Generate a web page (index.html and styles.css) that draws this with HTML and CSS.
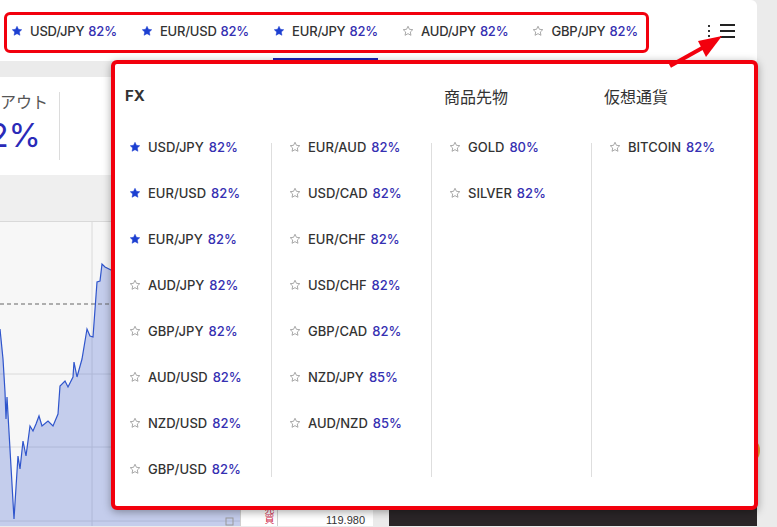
FILE: index.html
```html
<!DOCTYPE html>
<html lang="ja">
<head>
<meta charset="utf-8">
<title>Markets</title>
<link rel="stylesheet" href="styles.css">
</head>
<body>
<div class="app">
  <header class="topbar">
    <nav class="tabs">
      <a class="tab"><svg class="star on" viewBox="0 0 24 24"><path d="M12 2.5l2.9 6.1 6.6.8-4.9 4.6 1.3 6.6L12 17.3l-5.9 3.3 1.3-6.6-4.9-4.6 6.6-.8z"/></svg><span class="sym">USD/JPY</span><span class="pct">82%</span></a>
      <a class="tab"><svg class="star on" viewBox="0 0 24 24"><path d="M12 2.5l2.9 6.1 6.6.8-4.9 4.6 1.3 6.6L12 17.3l-5.9 3.3 1.3-6.6-4.9-4.6 6.6-.8z"/></svg><span class="sym">EUR/USD</span><span class="pct">82%</span></a>
      <a class="tab active"><svg class="star on" viewBox="0 0 24 24"><path d="M12 2.5l2.9 6.1 6.6.8-4.9 4.6 1.3 6.6L12 17.3l-5.9 3.3 1.3-6.6-4.9-4.6 6.6-.8z"/></svg><span class="sym">EUR/JPY</span><span class="pct">82%</span></a>
      <a class="tab"><svg class="star" viewBox="0 0 24 24"><path d="M12 2.5l2.9 6.1 6.6.8-4.9 4.6 1.3 6.6L12 17.3l-5.9 3.3 1.3-6.6-4.9-4.6 6.6-.8z"/></svg><span class="sym">AUD/JPY</span><span class="pct">82%</span></a>
      <a class="tab"><svg class="star" viewBox="0 0 24 24"><path d="M12 2.5l2.9 6.1 6.6.8-4.9 4.6 1.3 6.6L12 17.3l-5.9 3.3 1.3-6.6-4.9-4.6 6.6-.8z"/></svg><span class="sym">GBP/JPY</span><span class="pct">82%</span></a>
    </nav>
    <div class="tools">
      <span class="kebab"><i></i><i></i><i></i></span>
      <span class="burger"><i></i><i></i><i></i></span>
    </div>
  </header>

  <main class="main">
    <section class="stats">
      <div class="stat">
        <div class="stat-label">ペイアウト</div>
        <div class="stat-value">82%</div>
      </div>
    </section>
    <section class="toolbar"></section>
    <section class="trade">
      <div class="chart">
        <svg class="chart-svg" viewBox="0 0 240 304" width="240" height="304">
          <line x1="92" y1="0" x2="92" y2="304" class="grid"/>
          <line x1="0" y1="152" x2="240" y2="152" class="grid"/>
          <line x1="0" y1="225" x2="240" y2="225" class="grid"/>
          <line x1="0" y1="299" x2="240" y2="299" class="grid"/>
          <path class="area" d="M0,107 L3,137 L5,170 L6,197 L7,175 L14,297 L18,234 L20,247 L23,219 L26,234 L30,204 L33,209 L36,202 L39,194 L42,204 L48,199 L53,204 L58,192 L60,164 L65,159 L68,165 L73,155 L74,140 L77,155 L82,137 L87,107 L90,114 L93,115 L97,60 L100,59 L102,42 L105,45 L113,49 L130,60 L160,40 L200,70 L240,60 L240,304 L0,304 Z"/>
          <line x1="0" y1="82" x2="240" y2="82" class="dash"/>
          <path class="line" d="M0,107 L3,137 L5,170 L6,197 L7,175 L14,297 L18,234 L20,247 L23,219 L26,234 L30,204 L33,209 L36,202 L39,194 L42,204 L48,199 L53,204 L58,192 L60,164 L65,159 L68,165 L73,155 L74,140 L77,155 L82,137 L87,107 L90,114 L93,115 L97,60 L100,59 L102,42 L105,45 L113,49 L130,60 L160,40 L200,70 L240,60"/>
          <rect x="226" y="296" width="7" height="7" class="mini"/>
        </svg>
      </div>
      <div class="axis">
        <div class="axis-row">
          <span class="axis-tag">売買</span>
          <span class="axis-price">119.980</span>
        </div>
      </div>
      <div class="panel">
        <div class="panel-icons">
          <svg width="24" height="24" viewBox="0 0 24 24"><circle cx="12" cy="12" r="10" class="pi"/></svg>
          <svg width="24" height="24" viewBox="0 0 24 24"><circle cx="12" cy="12" r="10" class="pi"/></svg>
          <svg width="24" height="24" viewBox="0 0 24 24"><circle cx="10" cy="10" r="7" class="pi"/><line x1="15" y1="15" x2="21" y2="21" class="pi"/></svg>
        </div>
      </div>
    </section>
  </main>

  <div class="fab"></div>

  <div class="menu">
    <div class="menu-heads">
      <div class="head fx">FX</div>
      <div class="head"></div>
      <div class="head">商品先物</div>
      <div class="head">仮想通貨</div>
    </div>
    <div class="menu-cols">
      <ul class="col first">
        <li><svg class="star on" viewBox="0 0 24 24"><path d="M12 2.5l2.9 6.1 6.6.8-4.9 4.6 1.3 6.6L12 17.3l-5.9 3.3 1.3-6.6-4.9-4.6 6.6-.8z"/></svg><span class="sym">USD/JPY</span><span class="pct">82%</span></li>
        <li><svg class="star on" viewBox="0 0 24 24"><path d="M12 2.5l2.9 6.1 6.6.8-4.9 4.6 1.3 6.6L12 17.3l-5.9 3.3 1.3-6.6-4.9-4.6 6.6-.8z"/></svg><span class="sym">EUR/USD</span><span class="pct">82%</span></li>
        <li><svg class="star on" viewBox="0 0 24 24"><path d="M12 2.5l2.9 6.1 6.6.8-4.9 4.6 1.3 6.6L12 17.3l-5.9 3.3 1.3-6.6-4.9-4.6 6.6-.8z"/></svg><span class="sym">EUR/JPY</span><span class="pct">82%</span></li>
        <li><svg class="star" viewBox="0 0 24 24"><path d="M12 2.5l2.9 6.1 6.6.8-4.9 4.6 1.3 6.6L12 17.3l-5.9 3.3 1.3-6.6-4.9-4.6 6.6-.8z"/></svg><span class="sym">AUD/JPY</span><span class="pct">82%</span></li>
        <li><svg class="star" viewBox="0 0 24 24"><path d="M12 2.5l2.9 6.1 6.6.8-4.9 4.6 1.3 6.6L12 17.3l-5.9 3.3 1.3-6.6-4.9-4.6 6.6-.8z"/></svg><span class="sym">GBP/JPY</span><span class="pct">82%</span></li>
        <li><svg class="star" viewBox="0 0 24 24"><path d="M12 2.5l2.9 6.1 6.6.8-4.9 4.6 1.3 6.6L12 17.3l-5.9 3.3 1.3-6.6-4.9-4.6 6.6-.8z"/></svg><span class="sym">AUD/USD</span><span class="pct">82%</span></li>
        <li><svg class="star" viewBox="0 0 24 24"><path d="M12 2.5l2.9 6.1 6.6.8-4.9 4.6 1.3 6.6L12 17.3l-5.9 3.3 1.3-6.6-4.9-4.6 6.6-.8z"/></svg><span class="sym">NZD/USD</span><span class="pct">82%</span></li>
        <li><svg class="star" viewBox="0 0 24 24"><path d="M12 2.5l2.9 6.1 6.6.8-4.9 4.6 1.3 6.6L12 17.3l-5.9 3.3 1.3-6.6-4.9-4.6 6.6-.8z"/></svg><span class="sym">GBP/USD</span><span class="pct">82%</span></li>
      </ul>
      <ul class="col">
        <li><svg class="star" viewBox="0 0 24 24"><path d="M12 2.5l2.9 6.1 6.6.8-4.9 4.6 1.3 6.6L12 17.3l-5.9 3.3 1.3-6.6-4.9-4.6 6.6-.8z"/></svg><span class="sym">EUR/AUD</span><span class="pct">82%</span></li>
        <li><svg class="star" viewBox="0 0 24 24"><path d="M12 2.5l2.9 6.1 6.6.8-4.9 4.6 1.3 6.6L12 17.3l-5.9 3.3 1.3-6.6-4.9-4.6 6.6-.8z"/></svg><span class="sym">USD/CAD</span><span class="pct">82%</span></li>
        <li><svg class="star" viewBox="0 0 24 24"><path d="M12 2.5l2.9 6.1 6.6.8-4.9 4.6 1.3 6.6L12 17.3l-5.9 3.3 1.3-6.6-4.9-4.6 6.6-.8z"/></svg><span class="sym">EUR/CHF</span><span class="pct">82%</span></li>
        <li><svg class="star" viewBox="0 0 24 24"><path d="M12 2.5l2.9 6.1 6.6.8-4.9 4.6 1.3 6.6L12 17.3l-5.9 3.3 1.3-6.6-4.9-4.6 6.6-.8z"/></svg><span class="sym">USD/CHF</span><span class="pct">82%</span></li>
        <li><svg class="star" viewBox="0 0 24 24"><path d="M12 2.5l2.9 6.1 6.6.8-4.9 4.6 1.3 6.6L12 17.3l-5.9 3.3 1.3-6.6-4.9-4.6 6.6-.8z"/></svg><span class="sym">GBP/CAD</span><span class="pct">82%</span></li>
        <li><svg class="star" viewBox="0 0 24 24"><path d="M12 2.5l2.9 6.1 6.6.8-4.9 4.6 1.3 6.6L12 17.3l-5.9 3.3 1.3-6.6-4.9-4.6 6.6-.8z"/></svg><span class="sym">NZD/JPY</span><span class="pct">85%</span></li>
        <li><svg class="star" viewBox="0 0 24 24"><path d="M12 2.5l2.9 6.1 6.6.8-4.9 4.6 1.3 6.6L12 17.3l-5.9 3.3 1.3-6.6-4.9-4.6 6.6-.8z"/></svg><span class="sym">AUD/NZD</span><span class="pct">85%</span></li>
      </ul>
      <ul class="col">
        <li><svg class="star" viewBox="0 0 24 24"><path d="M12 2.5l2.9 6.1 6.6.8-4.9 4.6 1.3 6.6L12 17.3l-5.9 3.3 1.3-6.6-4.9-4.6 6.6-.8z"/></svg><span class="sym">GOLD</span><span class="pct">80%</span></li>
        <li><svg class="star" viewBox="0 0 24 24"><path d="M12 2.5l2.9 6.1 6.6.8-4.9 4.6 1.3 6.6L12 17.3l-5.9 3.3 1.3-6.6-4.9-4.6 6.6-.8z"/></svg><span class="sym">SILVER</span><span class="pct">82%</span></li>
      </ul>
      <ul class="col">
        <li><svg class="star" viewBox="0 0 24 24"><path d="M12 2.5l2.9 6.1 6.6.8-4.9 4.6 1.3 6.6L12 17.3l-5.9 3.3 1.3-6.6-4.9-4.6 6.6-.8z"/></svg><span class="sym">BITCOIN</span><span class="pct">82%</span></li>
      </ul>
    </div>
  </div>

  <div class="mark-tabs"></div>
  <svg class="arrow" viewBox="0 0 70 40" width="70" height="40">
    <line x1="6" y1="34" x2="40" y2="15" class="arrow-line"/>
    <polygon points="58,4 42,25 34,9" class="arrow-head"/>
  </svg>
</div>
</body>
</html>
```

FILE: styles.css
```css
* { box-sizing: border-box; }
html, body { margin: 0; padding: 0; }
body {
  background: #ebebeb;
  font-family: Inter, "Noto Sans", "Noto Sans CJK JP", sans-serif;
  color: #333;
}
.app {
  position: relative;
  width: 777px;
  height: 527px;
  overflow: hidden;
}

/* top bar */
.topbar {
  width: 757px;
  height: 61px;
  background: #fff;
  border-top-right-radius: 6px;
  display: flex;
  align-items: stretch;
}
.tabs {
  display: flex;
  gap: 24px;
  padding-left: 11px;
}
.tab {
  display: flex;
  align-items: center;
  padding-top: 4px;
  border-bottom: 3px solid transparent;
  font-size: 13px;
  font-weight: 500;
  letter-spacing: -0.2px;
  color: #333;
  white-space: nowrap;
}
.tab.active { border-bottom-color: #1d23b4; }
.star {
  width: 12px;
  height: 12px;
  flex: none;
  margin-right: 7px;
}
.star path { fill: none; stroke: #9a9a9a; stroke-width: 1.7; stroke-linejoin: round; }
.star.on path { fill: #1c3fd1; stroke: #1c3fd1; stroke-width: 1; }
.pct { color: #3630b2; margin-left: 4px; }

.tools {
  margin-left: auto;
  display: flex;
  align-items: center;
  gap: 10px;
  padding-right: 22px;
  padding-top: 1px;
}
.kebab { display: flex; flex-direction: column; gap: 3px; }
.kebab i { display: block; width: 2px; height: 2px; background: #333; }
.burger { display: flex; flex-direction: column; gap: 4px; }
.burger i { display: block; width: 15px; height: 2px; background: #222; }

/* main background */
.main { display: flex; flex-direction: column; }
.stats {
  margin-top: 16px;
  width: 757px;
  background: #fff;
  padding: 15px 0;
  display: flex;
}
.stat {
  margin-left: -32px;
  width: 92px;
  height: 68px;
  border-right: 1px solid #dcdcdc;
}
.stat-label {
  font-size: 16px;
  line-height: 20px;
  color: #555;
  white-space: nowrap;
}
.stat-value {
  margin-top: 3px;
  padding-left: 0;
  font-size: 33px;
  line-height: 40px;
  font-weight: 400;
  color: #2a2ab8;
  white-space: nowrap;
}
.toolbar {
  height: 47px;
  width: 757px;
  background: #efefef;
  border-bottom: 1px solid #d9d9d9;
}
.trade {
  display: flex;
  height: 304px;
  width: 757px;
}
.chart { width: 240px; background: #f7f7f7; flex: none; }
.chart-svg { display: block; }
.grid { stroke: #dadada; stroke-width: 1; }
.area { fill: #3a5bd0; fill-opacity: 0.27; }
.line { fill: none; stroke: #2f55cc; stroke-width: 1.2; }
.dash { stroke: #666; stroke-width: 1.2; stroke-dasharray: 4 3; }
.mini { fill: none; stroke: #9a9a9a; stroke-width: 1; }
.axis {
  width: 133px;
  flex: none;
  background: #fff;
  border-left: 1px solid #cfcfcf;
  display: flex;
  flex-direction: column;
  justify-content: flex-end;
}
.axis-row { display: flex; align-items: flex-end; height: 22px; }
.axis-tag {
  writing-mode: vertical-rl;
  color: #d0284a;
  font-size: 10px;
  margin-left: 24px;
  width: 13px;
  border-right: 1px solid #cfcfcf;
  height: 22px;
}
.axis-price {
  margin-left: auto;
  margin-right: 8px;
  font-size: 11px;
  line-height: 12px;
  color: #333;
  font-family: "Liberation Sans", sans-serif;
}
.panel {
  margin-left: 16px;
  flex: 1;
  background: #2a2527;
  display: flex;
  flex-direction: column;
  justify-content: flex-end;
}
.panel-icons {
  display: flex;
  justify-content: space-between;
  padding: 0 30px 16px 24px;
}
.pi { fill: none; stroke: #777; stroke-width: 1.5; }

.fab {
  position: absolute;
  left: 731px;
  top: 436px;
  width: 29px;
  height: 29px;
  border-radius: 50%;
  background: #eba232;
}

/* dropdown menu */
.menu {
  position: absolute;
  left: 111px;
  top: 60px;
  width: 647px;
  height: 450px;
  background: #fff;
  border: 4px solid #f2000d;
  border-radius: 6px;
  box-shadow: 0 2px 8px rgba(0,0,0,0.35);
}
.menu-heads {
  display: grid;
  grid-template-columns: 156px 160px 160px 160px;
  padding-top: 22px;
}
.head {
  font-size: 16px;
  line-height: 20px;
  color: #333;
  padding-left: 13px;
  font-family: "Noto Sans CJK JP", Inter, sans-serif;
}
.head.fx {
  padding-left: 10px;
  font-family: Inter, sans-serif;
  font-weight: 700;
  font-size: 15px;
}
.menu-cols {
  display: grid;
  grid-template-columns: 156px 160px 160px 160px;
  margin-top: 18px;
}
.col {
  list-style: none;
  margin: 0;
  padding: 0 0 0 18px;
  position: relative;
}
.col::before {
  content: "";
  position: absolute;
  left: 0;
  top: 19px;
  bottom: 15px;
  width: 1px;
  background: #dedede;
}
.col.first { padding-left: 14px; }
.col.first::before { display: none; }
.col li {
  height: 46px;
  display: flex;
  align-items: center;
  font-size: 13px;
  font-weight: 500;
  white-space: nowrap;
}
.col .pct { margin-left: 5px; }

/* annotations */
.mark-tabs {
  position: absolute;
  left: 4px;
  top: 12px;
  width: 645px;
  height: 41px;
  border: 3.5px solid #f2000d;
  border-radius: 6px;
}
.arrow {
  position: absolute;
  left: 664px;
  top: 32px;
}
.arrow-line { stroke: #f2000d; stroke-width: 4; }
.arrow-head { fill: #f2000d; }
```
